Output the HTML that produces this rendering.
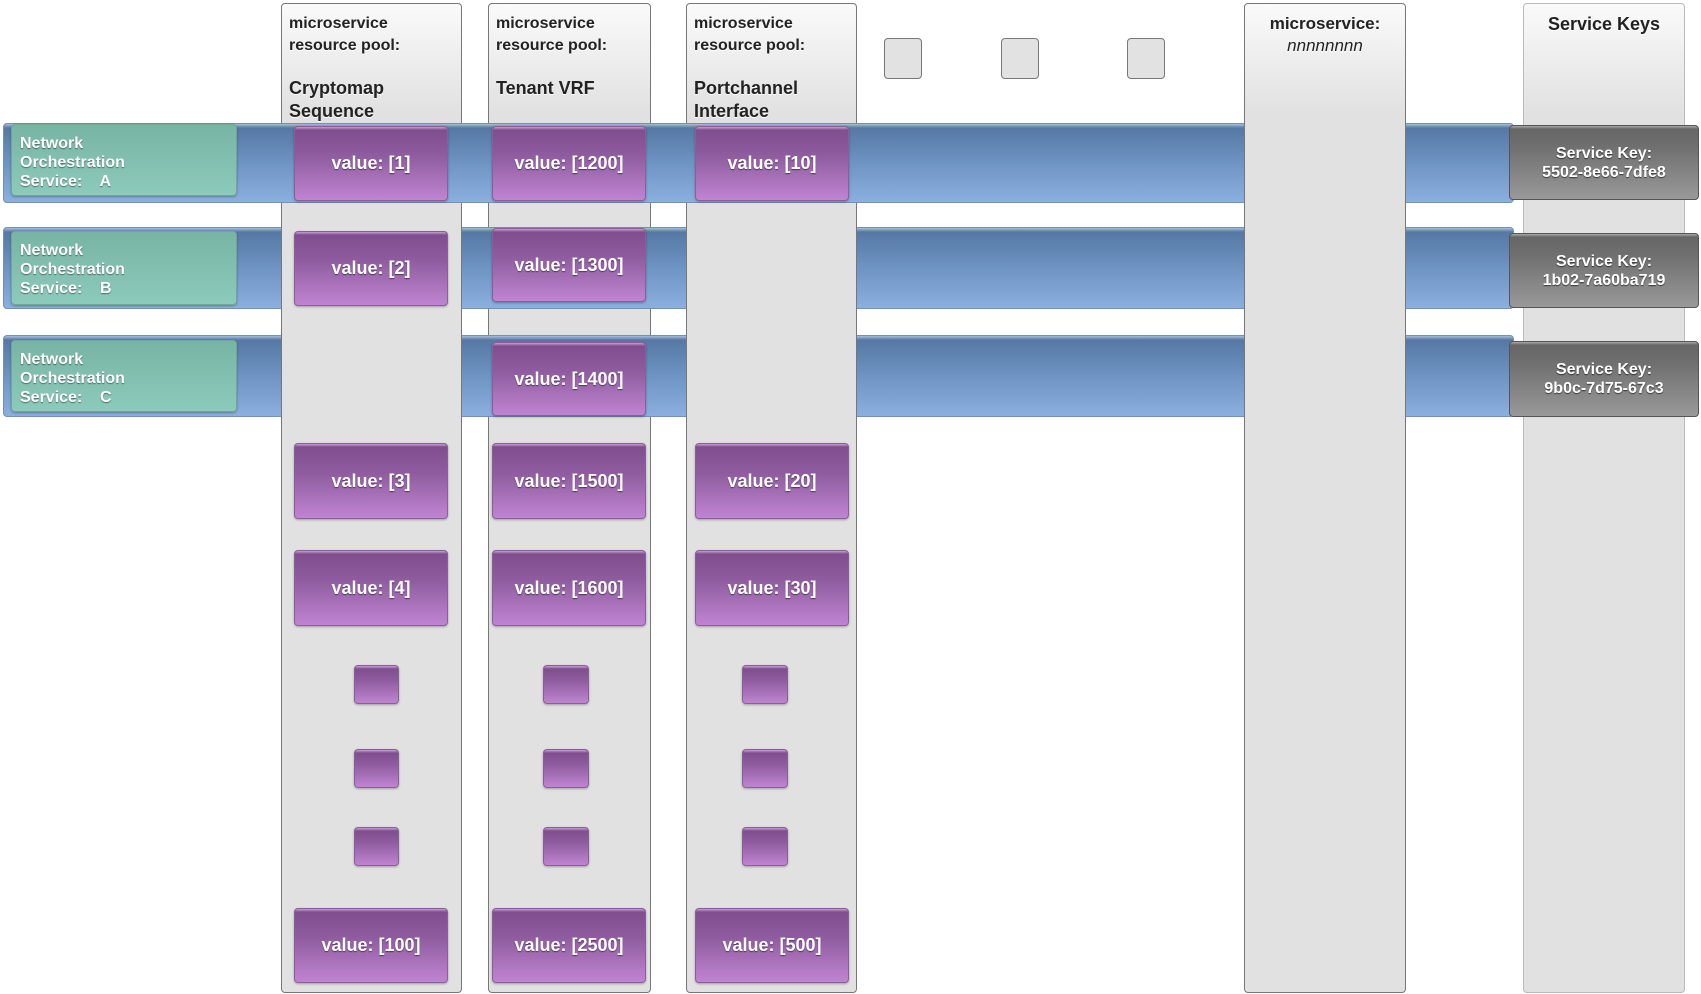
<!DOCTYPE html>
<html><head><meta charset="utf-8"><style>
body{margin:0;width:1701px;height:994px;background:#fff;position:relative;overflow:hidden;font-family:"Liberation Sans",Arial,sans-serif;font-weight:bold}
div{box-sizing:border-box;position:absolute}
.col{background:linear-gradient(#fafafa 0px,#e1e1e1 110px,#e1e1e1);border:1px solid #777;border-radius:4px;top:3px;height:990px}
.col .t{position:absolute;left:7px;top:9px;font-size:16px;line-height:22px;color:#222;font-weight:bold;text-shadow:0 1px 0 #fff}
.col .t .big{font-size:18px;line-height:23px;display:block;margin-top:20px}
.band{left:3px;width:1511px;border-radius:4px;background:linear-gradient(#a6bedc 0,#5678a3 4px,#6e94c4 50%,#8bb0e0 100%);border:1px solid #7590b8}
.g{left:11px;width:226px;border-radius:4px;background:linear-gradient(#78b4a4,#8ccabb);border:1px solid #6da898;box-shadow:0 1px 2px rgba(0,0,0,.3);color:#fff;font-size:16px;line-height:19px;padding:9px 0 0 8px;text-shadow:0 1px 1px rgba(0,0,0,.45)}
.p{border-radius:4px;background:linear-gradient(#c7a0d2 0,#7f4e8e 3px,#8f5d9f 40%,#c084d2 100%);border:1px solid #8c5c9c;box-shadow:0 1px 2px rgba(0,0,0,.3);color:#fff;font-size:18px;display:flex;align-items:center;justify-content:center;text-shadow:0 1px 1px rgba(0,0,0,.5)}
.k{left:1509px;width:190px;border-radius:4px;background:linear-gradient(#aaa 0,#666 3px,#707070 30%,#999 100%);border:1px solid #555;color:#fff;font-size:16px;line-height:19px;text-align:center;padding-top:18px;text-shadow:0 1px 1px rgba(0,0,0,.6)}
.sq{width:38px;height:41px;top:38px;border:1px solid #777;border-radius:4px;background:#e2e2e2}
</style></head><body>

<div class="col" style="left:488px;width:163px"><div class="t">microservice<br>resource pool:<span class="big">Tenant VRF</span></div></div>

<div class="band" style="top:227px;height:82px"></div>
<div class="band" style="top:335px;height:82px"></div>

<div class="col" style="left:281px;width:181px"><div class="t">microservice<br>resource pool:<span class="big">Cryptomap<br>Sequence</span></div></div>
<div class="col" style="left:686px;width:171px"><div class="t">microservice<br>resource pool:<span class="big">Portchannel<br>Interface</span></div></div>
<div class="col" style="left:1523px;width:162px;border-color:#bbb"><div class="t" style="left:0;width:100%;text-align:center;font-size:18px">Service Keys</div></div>

<div class="band" style="top:123px;height:80px"></div>

<div class="col" style="left:1244px;width:162px"><div class="t" style="left:0;width:100%;text-align:center;font-size:17px">microservice:<br><i style="font-weight:normal">nnnnnnnn</i></div></div>

<div class="sq" style="left:884px"></div>
<div class="sq" style="left:1001px"></div>
<div class="sq" style="left:1127px"></div>

<div class="g" style="top:124px;height:72px">Network<br>Orchestration<br>Service:&nbsp;&nbsp;&nbsp; A</div>
<div class="g" style="top:231px;height:74px">Network<br>Orchestration<br>Service:&nbsp;&nbsp;&nbsp; B</div>
<div class="g" style="top:340px;height:72px">Network<br>Orchestration<br>Service:&nbsp;&nbsp;&nbsp; C</div>

<div class="k" style="top:125px;height:75px">Service Key:<br>5502-8e66-7dfe8</div>
<div class="k" style="top:233px;height:75px">Service Key:<br>1b02-7a60ba719</div>
<div class="k" style="top:341px;height:76px">Service Key:<br>9b0c-7d75-67c3</div>

<div class="p" style="left:294px;width:154px;top:126px;height:75px">value: [1]</div>
<div class="p" style="left:294px;width:154px;top:231px;height:75px">value: [2]</div>
<div class="p" style="left:294px;width:154px;top:443px;height:76px">value: [3]</div>
<div class="p" style="left:294px;width:154px;top:550px;height:76px">value: [4]</div>
<div class="p" style="left:354px;width:45px;top:665px;height:39px"></div>
<div class="p" style="left:354px;width:45px;top:749px;height:39px"></div>
<div class="p" style="left:354px;width:45px;top:827px;height:39px"></div>
<div class="p" style="left:294px;width:154px;top:908px;height:75px">value: [100]</div>
<div class="p" style="left:492px;width:154px;top:126px;height:75px">value: [1200]</div>
<div class="p" style="left:492px;width:154px;top:228px;height:74px">value: [1300]</div>
<div class="p" style="left:492px;width:154px;top:342px;height:74px">value: [1400]</div>
<div class="p" style="left:492px;width:154px;top:443px;height:76px">value: [1500]</div>
<div class="p" style="left:492px;width:154px;top:550px;height:76px">value: [1600]</div>
<div class="p" style="left:543px;width:46px;top:665px;height:39px"></div>
<div class="p" style="left:543px;width:46px;top:749px;height:39px"></div>
<div class="p" style="left:543px;width:46px;top:827px;height:39px"></div>
<div class="p" style="left:492px;width:154px;top:908px;height:75px">value: [2500]</div>
<div class="p" style="left:695px;width:154px;top:126px;height:75px">value: [10]</div>
<div class="p" style="left:695px;width:154px;top:443px;height:76px">value: [20]</div>
<div class="p" style="left:695px;width:154px;top:550px;height:76px">value: [30]</div>
<div class="p" style="left:742px;width:46px;top:665px;height:39px"></div>
<div class="p" style="left:742px;width:46px;top:749px;height:39px"></div>
<div class="p" style="left:742px;width:46px;top:827px;height:39px"></div>
<div class="p" style="left:695px;width:154px;top:908px;height:75px">value: [500]</div>

</body></html>
